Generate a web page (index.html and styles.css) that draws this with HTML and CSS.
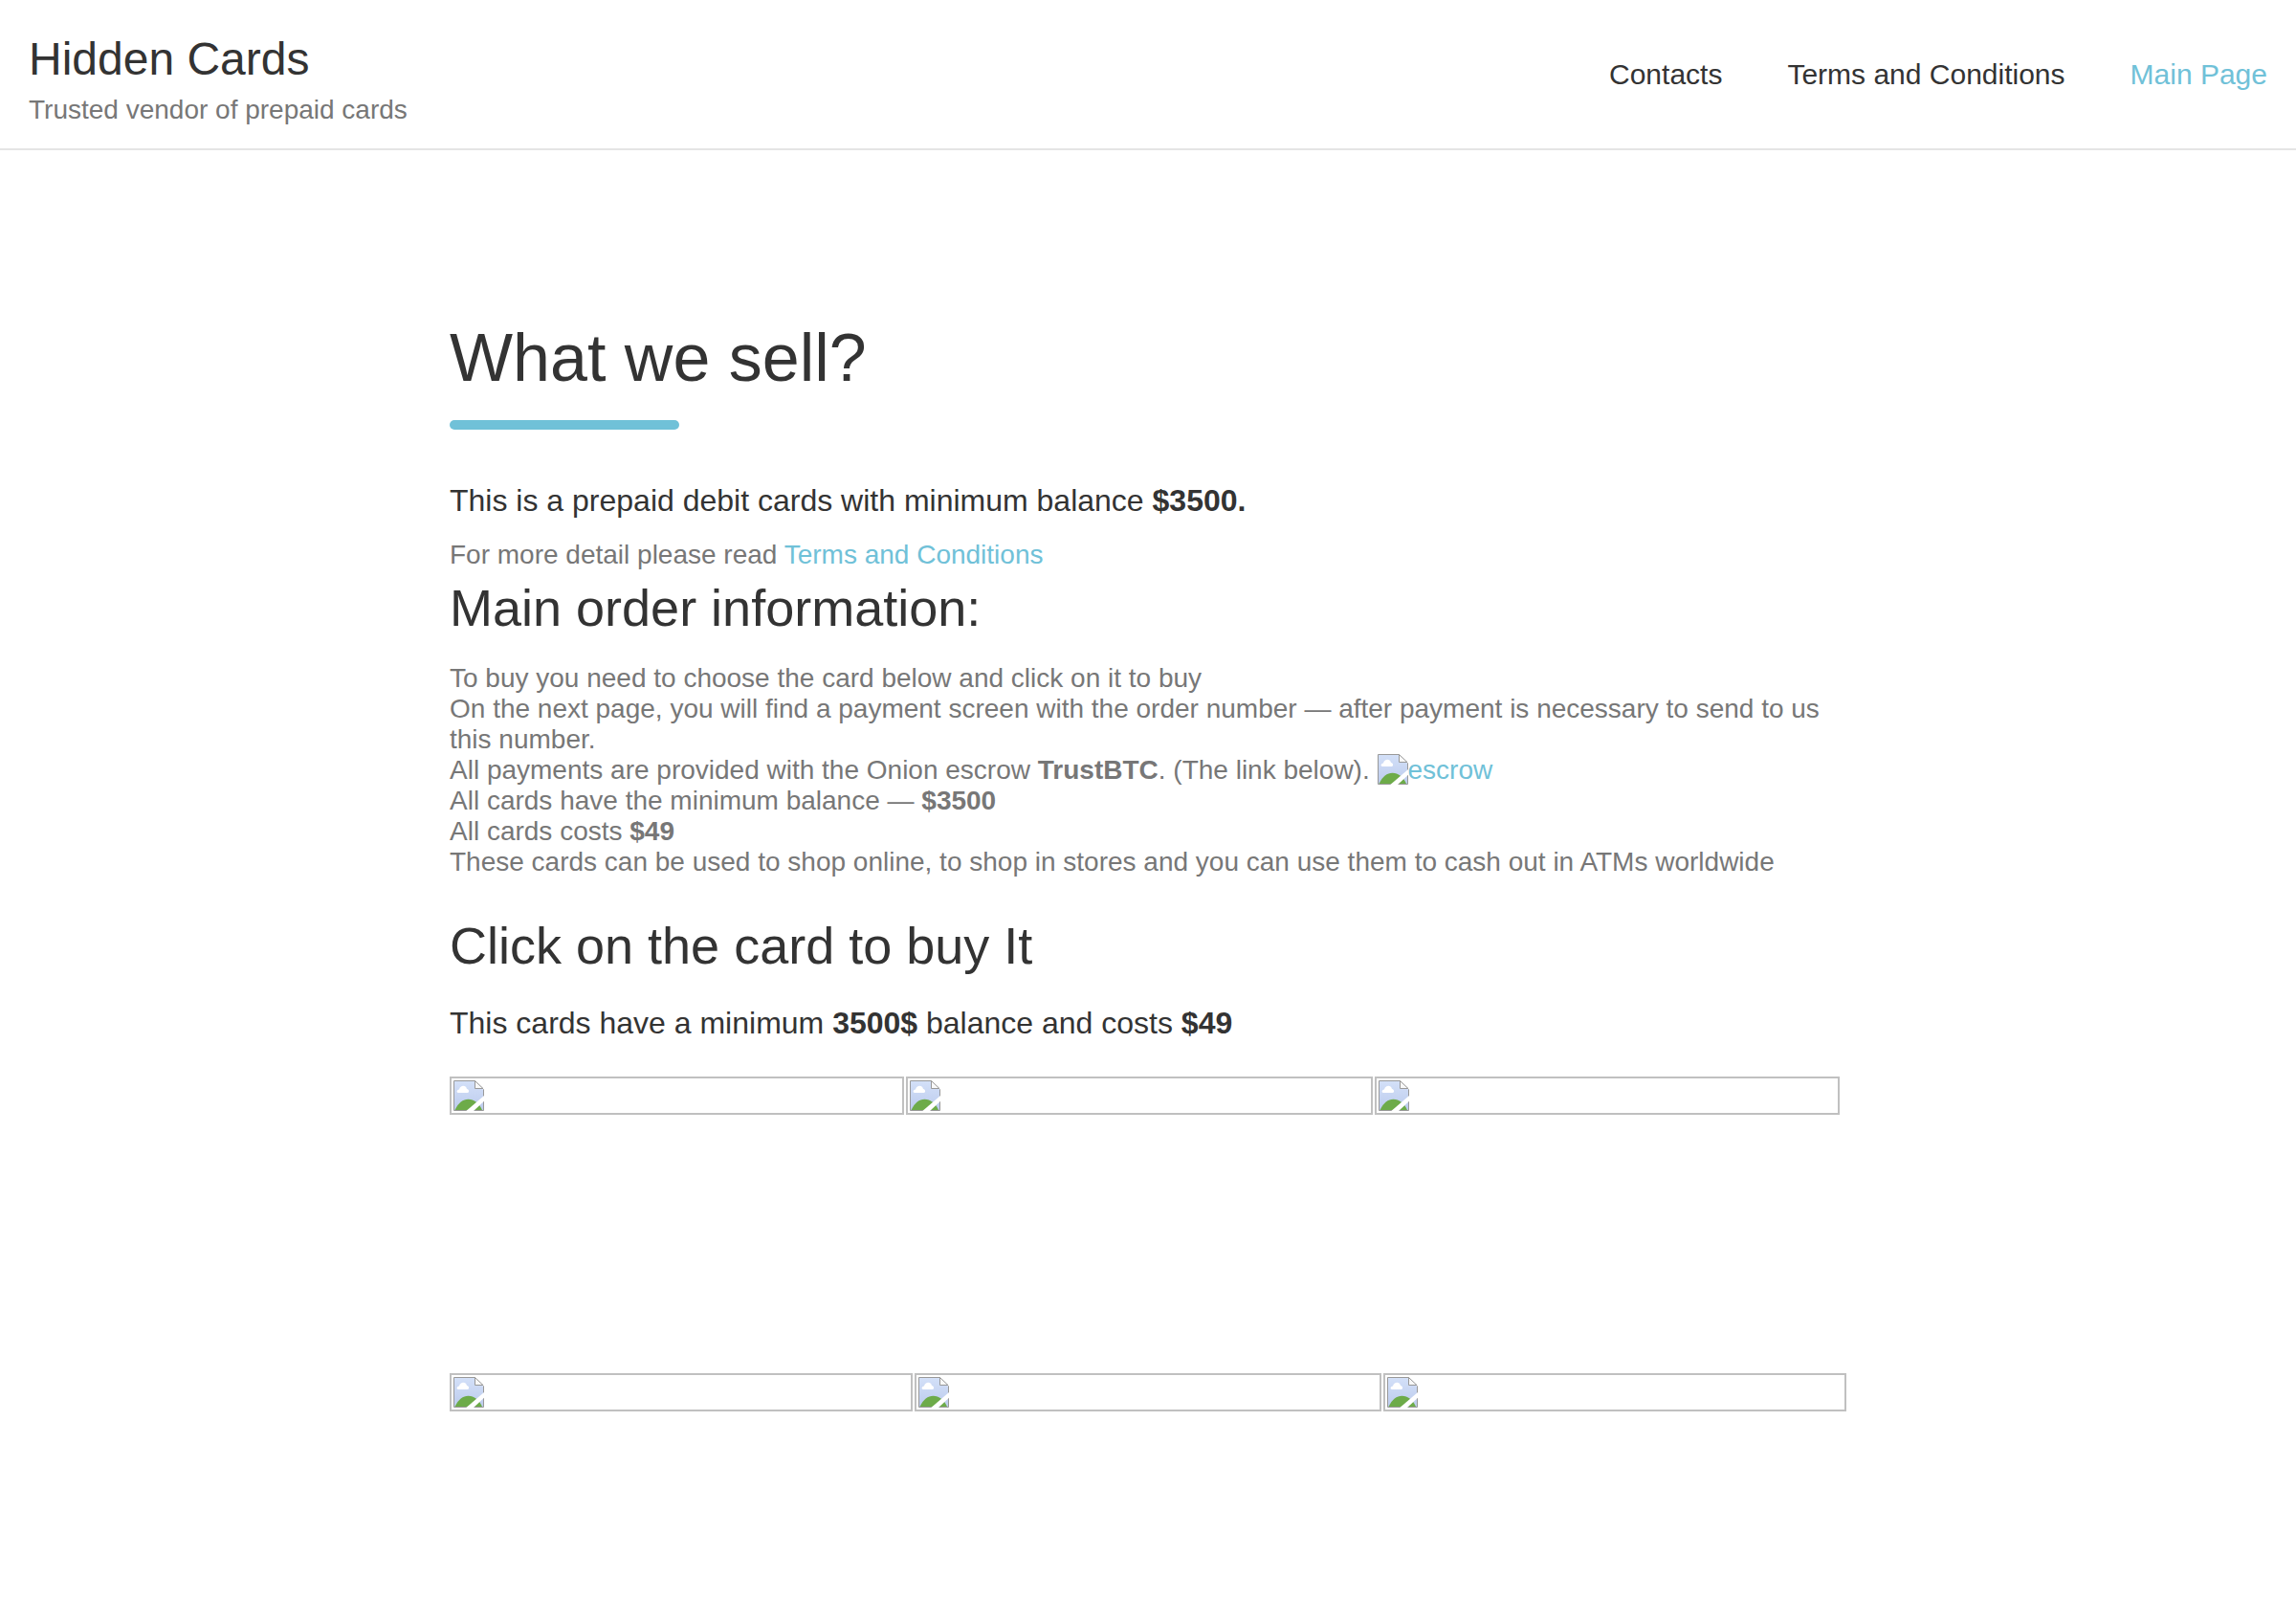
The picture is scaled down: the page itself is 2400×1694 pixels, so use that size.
FILE: index.html
```html
<!DOCTYPE html>
<html lang="en">
<head>
<meta charset="utf-8">
<title>Hidden Cards</title>
<link rel="stylesheet" href="styles.css">
</head>
<body>
<svg class="defs" width="0" height="0">
  <symbol id="picture" viewBox="0 0 32 32">
    <defs><linearGradient id="sky" x1="0" y1="0" x2="0" y2="1"><stop offset="0" stop-color="#d3e0f8"/><stop offset="1" stop-color="#bccbed"/></linearGradient></defs>
    <path d="M1 1H22.500L31 9.500V31H1Z" fill="url(#sky)"/>
    <path d="M1.500 31C5 23.500 10 19.700 15.500 19.700C21.500 19.700 27 24 30 31Z" fill="#6dab49"/>
    <path d="M5 13C3 13 3 10 6 9.500C7 5 13 4.500 14 9C16.500 9.500 17 13 14.500 13Z" fill="#fff"/>
    <path d="M.5 .5H22.500L31.500 9.500V31.500H.5Z" fill="none" stroke="#999"/>
    <path d="M22.500 .5V8.500H31Z" fill="#f8f8f8" stroke="#999"/>
    <path d="M13.300 32L32 16V21.800L21 32Z" fill="#fff"/>
  </symbol>
</svg>
<header class="header">
  <div>
    <div class="logo">Hidden Cards</div>
    <div class="tagline">Trusted vendor of prepaid cards</div>
  </div>
  <nav class="nav"><a>Contacts</a><a>Terms and Conditions</a><a class="link">Main Page</a></nav>
</header>
<main class="content">
  <h1>What we sell?</h1>
  <div class="rule"></div>
  <h4>This is a prepaid debit cards with minimum balance <b>$3500.</b></h4>
  <p class="detail">For more detail please read <a class="link">Terms and Conditions</a></p>
  <h2>Main order information:</h2>
  <ul class="info">
    <li>To buy you need to choose the card below and click on it to buy</li>
    <li>On the next page, you will find a payment screen with the order number — after payment is necessary to send to us this number.</li>
    <li>All payments are provided with the Onion escrow <b>TrustBTC</b>. (The link below). <a class="link"><svg class="pic inline"><use href="#picture"/></svg>escrow</a></li>
    <li>All cards have the minimum balance — <b>$3500</b></li>
    <li>All cards costs <b>$49</b></li>
    <li>These cards can be used to shop online, to shop in stores and you can use them to cash out in ATMs worldwide</li>
  </ul>
  <h2 class="buy">Click on the card to buy It</h2>
  <h4 class="price">This cards have a minimum <b>3500$</b> balance and costs <b>$49</b></h4>
  <div class="cards first">
    <a class="card"><svg class="pic"><use href="#picture"/></svg></a>
    <a class="card"><svg class="pic"><use href="#picture"/></svg></a>
    <a class="card"><svg class="pic"><use href="#picture"/></svg></a>
  </div>
  <div class="cards second">
    <a class="card"><svg class="pic"><use href="#picture"/></svg></a>
    <a class="card"><svg class="pic"><use href="#picture"/></svg></a>
    <a class="card"><svg class="pic"><use href="#picture"/></svg></a>
  </div>
</main>
</body>
</html>
```
FILE: styles.css
```css
* { box-sizing: border-box; margin: 0; padding: 0; }
body { background: #fff; color: #777; font: 28px/32px "Liberation Sans", Arial, sans-serif; }
.defs { display: block; }
.header { display: flex; justify-content: space-between; height: 157px; padding: 33px 30px 0; border-bottom: 2px solid #e5e5e5; }
.logo { color: #333; font-size: 48px; line-height: 58px; }
.tagline { margin-top: 8px; }
.nav { display: flex; gap: 68px; padding-top: 27px; color: #333; font-size: 30px; line-height: 36px; }
.nav .link, .link { color: #70c1d8; }
.content { width: 1460px; margin: 0 auto; padding-top: 175px; }
h1, h2, h4 { color: #333; font-weight: 400; }
h1 { font-size: 70px; line-height: 84px; }
.rule { width: 240px; height: 10px; margin-top: 23px; border-radius: 5px; background: #70c1d8; }
h4 { font-size: 32px; line-height: 38px; }
.rule + h4 { margin-top: 55px; }
.detail { margin-top: 22px; }
h2 { margin-top: 7px; font-size: 54px; line-height: 64px; }
.info { margin-top: 26px; list-style: none; }
.buy { margin-top: 39px; }
.price { margin-top: 30px; }
.pic { display: block; width: 32px; height: 32px; }
.inline { display: inline-block; margin-top: -1px; vertical-align: -6px; }
.cards { display: grid; gap: 2px; }
.first { grid-template-columns: 475px 488px 486px; margin-top: 37px; }
.second { grid-template-columns: 484px 488px 484px; margin-top: 270px; }
.card { height: 40px; padding: 2px; border: 2px solid #c0c0c0; }
```
